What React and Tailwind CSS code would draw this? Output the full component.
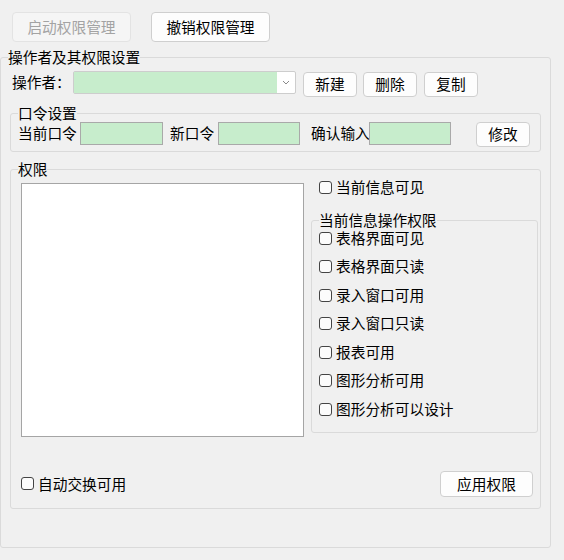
import React from "react";

const font = { fontFamily: '"Noto Sans CJK SC", "Noto Sans", sans-serif' };

function Btn({ children, className = "", disabled = false }) {
  return (
    <button
      type="button"
      disabled={disabled}
      className={
        "flex items-center justify-center whitespace-nowrap rounded-[4px] border text-[14.7px] leading-none " +
        (disabled
          ? "border-[#e3e3e3] bg-[#f5f5f5] text-[#a3a3a3]"
          : "border-[#cfcfcf] bg-[#fdfdfd] text-black") +
        " " +
        className
      }
    >
      {children}
    </button>
  );
}

function Check({ label, className = "" }) {
  return (
    <label className={"flex items-center gap-[4px] whitespace-nowrap text-[14.7px] leading-none text-black " + className}>
      <span className="h-[13px] w-[13px] shrink-0 rounded-[3px] border border-[#444] bg-[#fcfcfc]" />
      <span>{label}</span>
    </label>
  );
}

function Group({ title, className = "", children }) {
  return (
    <fieldset className={"m-0 rounded-[3px] border border-[#dadada] p-0 " + className}>
      <legend className="ml-[7px] whitespace-nowrap p-0 text-[14.7px] leading-[16px] text-black">{title}</legend>
      {children}
    </fieldset>
  );
}

function GreenInput({ className = "" }) {
  return <div className={"h-[23px] shrink-0 border border-[#a9a9a9] bg-[#c7edcc] " + className} />;
}

const rights = [
  "表格界面可见",
  "表格界面只读",
  "录入窗口可用",
  "录入窗口只读",
  "报表可用",
  "图形分析可用",
  "图形分析可以设计",
];

export default function App() {
  return (
    <div className="h-[560px] w-[564px] overflow-hidden bg-[#f0f0f0]" style={font}>
      <div className="flex gap-[20px] pl-[12px] pt-[12px]">
        <Btn disabled className="h-[30px] w-[119px]">启动权限管理</Btn>
        <Btn className="h-[30px] w-[119px]">撤销权限管理</Btn>
      </div>

      <Group title="操作者及其权限设置" className="mt-[7px] w-[551px]">
        <div className="px-[9px] pb-[38px] pt-[6px]">
          {/* operator picker */}
          <div className="flex h-[26px] items-start">
            <div className="ml-[2px] flex h-[22px] w-[61px] items-center whitespace-nowrap text-[14.7px] leading-none">操作者：</div>
            <div className="flex h-[23px] w-[223px] rounded-[2px] border border-[#cdcdcd] bg-white">
              <div className="w-[203px] bg-[#c7edcc]" />
              <div className="flex flex-1 items-center justify-center">
                <svg width="8" height="5" viewBox="0 0 8 5" fill="none">
                  <path d="M1 1l3 3 3-3" stroke="#8a8a8a" strokeWidth="1" />
                </svg>
              </div>
            </div>
            <Btn className="ml-[7px] mt-[1px] h-[25px] w-[54px]">新建</Btn>
            <Btn className="ml-[6px] mt-[1px] h-[25px] w-[54px]">删除</Btn>
            <Btn className="ml-[7px] mt-[1px] h-[25px] w-[54px]">复制</Btn>
          </div>

          {/* password */}
          <Group title="口令设置" className="mt-[8px] w-[531px]">
            <div className="flex h-[25px] items-start whitespace-nowrap pb-[4px] pl-[7px] pt-[1px] text-[14.7px] leading-none" style={{ boxSizing: "content-box" }}>
              <div className="flex h-[23px] w-[62px] shrink-0 items-center">当前口令</div>
              <GreenInput className="w-[83px]" />
              <div className="ml-[7px] flex h-[23px] w-[48px] shrink-0 items-center">新口令</div>
              <GreenInput className="w-[82px]" />
              <div className="ml-[11px] flex h-[23px] w-[58px] shrink-0 items-center">确认输入</div>
              <GreenInput className="w-[82px]" />
              <Btn className="ml-[25px] h-[25px] w-[54px]">修改</Btn>
            </div>
          </Group>

          {/* rights */}
          <Group title="权限" className="mt-[9px] w-[531px]">
            <div className="pb-[11px] pl-[10px] pt-[1px]">
              <div className="flex items-start">
                <div className="mt-[5px] h-[254px] w-[283px] border border-[#a5a5a5] bg-white" />
                <div className="ml-[7px]">
                  <Check label="当前信息可见" className="h-[18px] pl-[8px]" />
                  <Group title="当前信息操作权限" className="mt-[16px] w-[227px]">
                    <div className="flex flex-col gap-[10.5px] pb-[14px] pl-[7px] pt-[1px]">
                      {rights.map((r) => (
                        <Check key={r} label={r} className="h-[18px]" />
                      ))}
                    </div>
                  </Group>
                </div>
              </div>
              <div className="mt-[34px] flex h-[26px] items-center">
                <Check label="自动交换可用" />
                <Btn className="ml-auto mr-[7px] h-[26px] w-[93px]">应用权限</Btn>
              </div>
            </div>
          </Group>
        </div>
      </Group>
    </div>
  );
}
